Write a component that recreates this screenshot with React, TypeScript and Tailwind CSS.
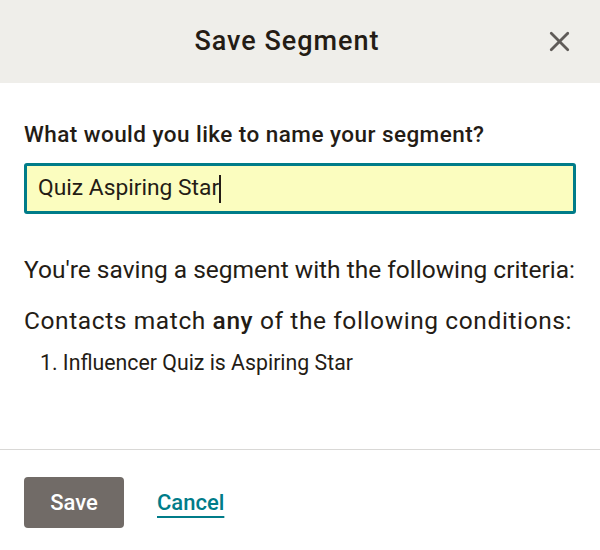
import { X } from "lucide-react";

export default function App() {
  return (
    <div
      className="w-[600px] h-[550px] bg-white flex flex-col text-[#241c15]"
      style={{ fontFamily: "Roboto, 'Noto Sans', sans-serif" }}
    >
      <div className="h-[83px] shrink-0 bg-[#efeeea] flex items-center justify-center relative pr-[26px]">
        <h1 className="text-[27px] font-medium tracking-[1px]">Save Segment</h1>
        <button className="absolute right-[24px] top-[25px] text-[#5f5b58]">
          <X size={33} strokeWidth={2} />
        </button>
      </div>

      <div className="flex-1 px-6 pt-[37px]">
        <label className="block text-[22.5px] font-medium leading-7 tracking-[0.45px] whitespace-nowrap">
          What would you like to name your segment?
        </label>
        <div className="mt-[15px] h-[51px] border-[3px] border-[#007c89] rounded-[3px] bg-[#fbfdbf] flex items-center px-[11px]">
          <span className="text-[22.8px]">Quiz Aspiring Star</span>
          <span className="w-[1.5px] h-[28px] bg-[#241c15]" />
        </div>

        <p className="mt-[40px] text-[24.5px] leading-8 whitespace-nowrap">
          You're saving a segment with the following criteria:
        </p>
        <p className="mt-[19px] text-[24.5px] leading-8 tracking-[0.6px] whitespace-nowrap">
          Contacts match <span className="font-medium">any</span> of the following conditions:
        </p>
        <ol className="mt-[12px] pl-[16px] text-[21.3px] leading-7">
          <li>1. Influencer Quiz is Aspiring Star</li>
        </ol>
      </div>

      <div className="h-[101px] shrink-0 border-t border-[#d9d8d6] flex items-center px-6 gap-[33px] pt-[5px]">
        <button className="w-[100px] h-[51px] rounded-[4px] bg-[#716b67] text-white text-[22px] font-medium">
          Save
        </button>
        <a className="text-[#007c89] text-[22px] font-medium underline underline-offset-[6px] decoration-[2px]">
          Cancel
        </a>
      </div>
    </div>
  );
}
